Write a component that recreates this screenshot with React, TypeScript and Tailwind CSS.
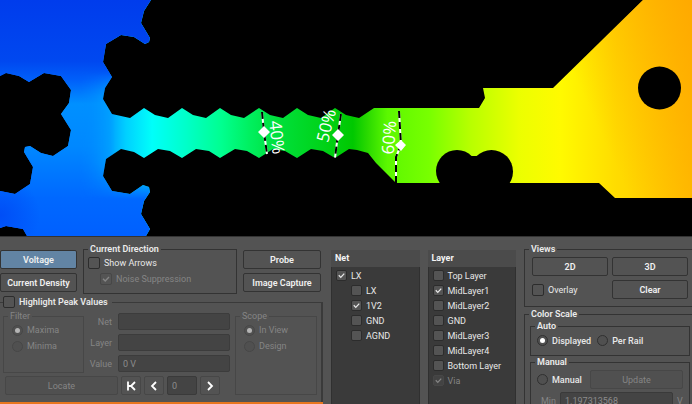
import { ReactNode } from "react";

const HEADER = "bg-[#4b4b4b] px-1 h-[17px] leading-4 font-bold text-[#f4f4f4]";

const nets = [
    { name: "LX", checked: true, child: false },
    { name: "LX", checked: false, child: true },
    { name: "1V2", checked: true, child: true },
    { name: "GND", checked: false, child: true },
    { name: "AGND", checked: false, child: true }
];

const layers = [
    { name: "Top Layer", checked: false },
    { name: "MidLayer1", checked: true },
    { name: "MidLayer2", checked: false },
    { name: "GND", checked: false },
    { name: "MidLayer3", checked: false },
    { name: "MidLayer4", checked: false },
    { name: "Bottom Layer", checked: false },
    { name: "Via", checked: true, disabled: true }
];

function Check({ label, checked = false, disabled = false, small = false }: { label: string; checked?: boolean; disabled?: boolean; small?: boolean }) {
    return (
        <label className={`flex items-center gap-1 whitespace-nowrap ${small ? "h-[15px]" : "h-4"} ${disabled ? "text-[#858585]" : "text-[#e8e8e8]"}`}>
            <span className={`relative block shrink-0 ${small ? "size-[11px]" : "size-3"}`}>
                <input
                    type="checkbox"
                    defaultChecked={checked}
                    disabled={disabled}
                    className={`peer block size-full appearance-none rounded-xs border ${disabled ? "border-[#474747]" : "border-[#2c2c2c]"} ${small && disabled ? "bg-[#434343]" : "bg-[#545454]"}`}
                />
                <svg viewBox="0 0 12 12" className="pointer-events-none absolute inset-0 hidden size-full peer-checked:block" fill="none" stroke="currentColor" strokeWidth="1.4">
                    <path d="M3 5.8 L5.2 8 L9 4" />
                </svg>
            </span>
            {label}
        </label>
    )
}

function Radio({ label, name, checked = false, disabled = false }: { label: string; name: string; checked?: boolean; disabled?: boolean }) {
    return (
        <label className={`flex items-center gap-1 whitespace-nowrap ${disabled ? "h-4 text-[#858585]" : "h-[17px] font-medium text-[#e8e8e8]"}`}>
            <span className="relative block size-[11px] shrink-0">
                <input
                    type="radio"
                    name={name}
                    defaultChecked={checked}
                    disabled={disabled}
                    className="peer block size-full appearance-none rounded-full border border-[#303030] bg-[#505050] disabled:border-[#474747]"
                />
                <span className={`pointer-events-none absolute inset-[3px] hidden rounded-full peer-checked:block ${disabled ? "bg-[#b4b4b4]" : "bg-white"}`} />
            </span>
            {label}
        </label>
    )
}

function Button({ children, className = "border-[#333333]", label }: { children: ReactNode; className?: string; label?: string }) {
    return (
        <button aria-label={label} className={`flex h-[19px] items-center justify-center whitespace-nowrap rounded-xs border font-semibold text-[#f0f0f0] ${className}`}>
            {children}
        </button>
    )
}

function Group({ title, disabled = false, className = "", children }: { title: string; disabled?: boolean; className?: string; children: ReactNode }) {
    return (
        <fieldset className={`min-w-0 border ${disabled ? "border-[#474747]" : "border-[#333333]"} ${className}`}>
            <legend className={`ml-1 px-0.5 leading-3 ${disabled ? "text-[#858585]" : "font-semibold text-[#ececec]"}`}>{title}</legend>
            {children}
        </fieldset>
    )
}

function Field({ label, value = "" }: { label: string; value?: string }) {
    return (
        <label className="flex items-center gap-1.5 text-[#858585]">
            <span className="w-7 text-right">{label}</span>
            <input defaultValue={value} disabled className="h-[17px] w-28 rounded-xs border border-[#3c3c3c] bg-[#444444] px-1 text-[#8c8c8c]" />
        </label>
    )
}

function VoltageMap() {
    return (
        <svg viewBox="0 0 692 236" preserveAspectRatio="xMidYMid slice" className="block h-[236px] w-full shrink-0 bg-black" role="img" aria-label="Voltage map">
            <defs>
                <linearGradient id="drop" gradientUnits="userSpaceOnUse" x1="0" y1="0" x2="692" y2="0">
                    <stop offset="0" stopColor="#0060ff" />
                    <stop offset="0.13" stopColor="#0090ff" />
                    <stop offset="0.16" stopColor="#00a4ff" />
                    <stop offset="0.182" stopColor="#00d0ff" />
                    <stop offset="0.22" stopColor="#00fffa" />
                    <stop offset="0.27" stopColor="#00ffc8" />
                    <stop offset="0.32" stopColor="#00ff90" />
                    <stop offset="0.36" stopColor="#00f060" />
                    <stop offset="0.4" stopColor="#00e03c" />
                    <stop offset="0.46" stopColor="#00d41c" />
                    <stop offset="0.51" stopColor="#00c800" />
                    <stop offset="0.53" stopColor="#28d800" />
                    <stop offset="0.56" stopColor="#5cf800" />
                    <stop offset="0.62" stopColor="#78ff00" />
                    <stop offset="0.68" stopColor="#b8ff00" />
                    <stop offset="0.75" stopColor="#ecff00" />
                    <stop offset="0.81" stopColor="#fffa00" />
                    <stop offset="0.89" stopColor="#ffdc00" />
                    <stop offset="1" stopColor="#ffc000" />
                </linearGradient>
                <linearGradient id="cold" x1="0" y1="0" x2="0" y2="1">
                    <stop offset="0" stopColor="#003cec" />
                    <stop offset="0.26" stopColor="#0048f0" />
                    <stop offset="0.34" stopColor="#0060fa" />
                    <stop offset="0.44" stopColor="#0090ff" />
                    <stop offset="0.62" stopColor="#0088ff" />
                    <stop offset="0.84" stopColor="#0068ff" />
                    <stop offset="1" stopColor="#0060ff" />
                </linearGradient>
                <linearGradient id="fade" x1="0" y1="0" x2="1" y2="0">
                    <stop offset="0" stopColor="white" />
                    <stop offset="0.5" stopColor="white" />
                    <stop offset="0.72" stopColor="black" />
                </linearGradient>
                <linearGradient id="fadeTop" x1="0" y1="0" x2="0" y2="1">
                    <stop offset="0.75" stopColor="white" />
                    <stop offset="1" stopColor="white" stopOpacity="0" />
                </linearGradient>
                <linearGradient id="fadeBottom" x1="0" y1="1" x2="0" y2="0">
                    <stop offset="0.5" stopColor="white" />
                    <stop offset="1" stopColor="white" stopOpacity="0" />
                </linearGradient>
                <mask id="coldMask">
                    <rect width="160" height="236" fill="url(#fade)" />
                    <rect width="160" height="96" fill="url(#fadeTop)" />
                    <rect y="162" width="160" height="74" fill="url(#fadeBottom)" />
                </mask>
                <radialGradient id="dark" gradientUnits="userSpaceOnUse" cx="0" cy="215" r="40">
                    <stop offset="0" stopColor="#0048f4" stopOpacity="0.8" />
                    <stop offset="1" stopColor="#0048f4" stopOpacity="0" />
                </radialGradient>
                <linearGradient id="hot" gradientUnits="userSpaceOnUse" x1="590" y1="110" x2="720" y2="50">
                    <stop offset="0" stopColor="#ffa600" stopOpacity="0" />
                    <stop offset="1" stopColor="#ffa600" stopOpacity="0.9" />
                </linearGradient>
                <clipPath id="copper">
                    <path
                        clipRule="evenodd"
                        d="M0 0 H151 L144 11 L141 23 L150 38 L149 42 L145 44 L134 37 L121 35 L106 44 L103 62 L112 77 L105 88 L103 99 L112 114 L130 118
                        L144 108 L155 115 L168 118 L182 108 L193 115 L206 118 L220 108 L231 115 L244 118 L259 108 L270 115 L283 118 L297 108 L308 115 L321 118
                        L335 108 L346 115 L359 118 L374 108 H479 L485 98 L483 88 H553 L643 0 H692 V198 H615 L599 183
                        H396 L376 163 L368 153 L357 150 L349 149 L335 158
                        L323 151 L311 149 L297 158 L285 151 L273 149 L259 158 L247 151 L235 149 L220 158 L209 151 L196 149 L182 158 L170 151 L158 149
                        L144 158 L134 152 L121 149 L106 159 L103 176 L112 191 L130 194 L143 185 L149 187 L150 192 L144 201 L141 214 L150 229 L146 236
                        H27 L23 229 L6 226 L0 228 Z
                        M0 76 L6 73 L19 76 L29 82 L44 73 L61 76 L71 90 L69 103 L61 114 L71 130 L68 146 L53 156 L41 153 L30 146 L25 147 L24 152 L33 167 L30 184 L15 194 L0 191 Z"
                    />
                </clipPath>
            </defs>
            <g clipPath="url(#copper)">
                <rect width="692" height="236" fill="url(#drop)" />
                <rect width="160" height="236" fill="url(#cold)" mask="url(#coldMask)" />
                <rect y="170" width="70" height="66" fill="url(#dark)" />
                <rect x="540" width="152" height="200" fill="url(#hot)" />
            </g>
            <circle cx="457" cy="171" r="21" />
            <circle cx="491.500" cy="171.500" r="21.500" />
            <path d="M466 156 H482 V172 H466 Z" />
            <circle cx="659.500" cy="88" r="21.500" />
            <g fill="none" strokeWidth="2">
                <path d="M262 112 L264 132 L267 154 M341 114 L338 134 L335 158 M399 111 L401 145 L396 157 V183" stroke="white" />
                <path d="M262 112 L264 132 L267 154 M341 114 L338 134 L335 158 M399 111 L401 145 L396 157 V183" stroke="black" strokeDasharray="7 4" />
            </g>
            <path d="M264 126 L270 132 L264 138 L258 132 Z M338 129 L344 135 L338 141 L332 135 Z M401 140 L406 145 L401 151 L395 145 Z" fill="white" />
            <g fill="white" fontSize="17" textAnchor="middle" fontFamily="'Open Sans', sans-serif">
                <text transform="translate(271 138) rotate(84)">40%</text>
                <text transform="translate(332 127) rotate(-76)">50%</text>
                <text transform="translate(395 138) rotate(-86)">60%</text>
            </g>
        </svg>
    )
}

export default function App() {
    return (
        <div className="flex h-screen flex-col overflow-hidden bg-[#535353] font-[Roboto,sans-serif] text-[9px] leading-4">
            <VoltageMap />
            <div className="flex min-h-0 flex-1 border-t border-[#333333]">
                <div className="flex w-[323px] shrink-0 flex-col border-b-2 border-[#e8761e]">
                    <div className="flex gap-1.5 pt-[6px] pr-0.5">
                        <div className="flex w-[77px] flex-col gap-1 pt-[7px]">
                            <Button className="border-[#333333] bg-[#6284a4]">Voltage</Button>
                            <Button>Current Density</Button>
                        </div>
                        <Group title="Current Direction" className="h-[51px] flex-1">
                            <div className="pl-1">
                                <Check label="Show Arrows" />
                                <div className="pl-3">
                                    <Check label="Noise Suppression" checked disabled />
                                </div>
                            </div>
                        </Group>
                        <div className="flex w-[78px] flex-col gap-1 pt-[7px]">
                            <Button>Probe</Button>
                            <Button>Image Capture</Button>
                        </div>
                    </div>
                    <fieldset className="min-h-0 min-w-0 flex-1 border-t border-r-2 border-[#3a3a3a]">
                        <legend className="ml-[3px] pr-1 font-semibold">
                            <Check label="Highlight Peak Values" />
                        </legend>
                        <div className="flex justify-between pr-1 pl-[3px]">
                            <div className="flex flex-col gap-[3px]">
                                <div className="flex">
                                    <Group title="Filter" disabled className="h-[63px] w-[81px]">
                                        <div className="pl-2">
                                            <Radio name="filter" label="Maxima" checked disabled />
                                            <Radio name="filter" label="Minima" disabled />
                                        </div>
                                    </Group>
                                    <div className="flex flex-col gap-1 pt-[3px]">
                                        <Field label="Net" />
                                        <Field label="Layer" />
                                        <Field label="Value" value="0 V" />
                                    </div>
                                </div>
                                <div className="flex gap-[3px] pl-0.5">
                                    <button disabled className="h-[19px] w-[113px] rounded-xs border border-[#474747] bg-[#505050] text-[#858585]">Locate</button>
                                    <Button label="First peak" className="w-5 border-[#474747]">
                                        <svg viewBox="0 0 12 12" className="size-3 shrink-0" fill="none" stroke="white" strokeWidth="1.8"><path d="M3 1.5 V10.5 M10 2 L6 6 L10 10 M6 6 H3" /></svg>
                                    </Button>
                                    <Button label="Previous peak" className="w-5 border-[#474747]">
                                        <svg viewBox="0 0 12 12" className="size-3 shrink-0" fill="none" stroke="white" strokeWidth="1.8"><path d="M8 2 L4 6 L8 10" /></svg>
                                    </Button>
                                    <input aria-label="Peak index" defaultValue="0" disabled className="h-[19px] w-[30px] rounded-xs border border-[#3a3a3a] bg-[#444444] px-1 text-[#8c8c8c]" />
                                    <Button label="Next peak" className="w-5 border-[#474747]">
                                        <svg viewBox="0 0 12 12" className="size-3 shrink-0" fill="none" stroke="white" strokeWidth="1.8"><path d="M4 2 L8 6 L4 10" /></svg>
                                    </Button>
                                </div>
                            </div>
                            <Group title="Scope" disabled className="h-[85px] w-[82px]">
                                <div className="pl-2">
                                    <Radio name="scope" label="In View" checked disabled />
                                    <Radio name="scope" label="Design" disabled />
                                </div>
                            </Group>
                        </div>
                    </fieldset>
                </div>

                <div className="flex flex-1 gap-2 pt-[13px] pl-2">
                    <section className="flex flex-1 flex-col">
                        <h2 className={HEADER}>Net</h2>
                        <div className="flex-1 border-x border-[#303030] bg-[#3a3a3a] pt-px pl-1">
                            {
                                nets.map((net, i) => {
                                    return (
                                        <div key={i} className={net.child ? "pl-[15px]" : ""}>
                                            <Check small label={net.name} checked={net.checked} />
                                        </div>
                                    )
                                })
                            }
                        </div>
                    </section>
                    <section className="flex flex-1 flex-col">
                        <h2 className={HEADER}>Layer</h2>
                        <div className="flex-1 border-x border-[#303030] bg-[#3a3a3a] pt-px pl-1">
                            {
                                layers.map((layer) => {
                                    return <Check key={layer.name} small label={layer.name} checked={layer.checked} disabled={layer.disabled} />
                                })
                            }
                        </div>
                    </section>
                </div>

                <div className="ml-2 flex w-[168px] shrink-0 flex-col gap-px pt-1.5">
                    <Group title="Views" className="h-16 border-r-0">
                        <div className="grid grid-cols-2 gap-1 pt-0.5 pr-1 pl-[7px]">
                            <Button>2D</Button>
                            <Button>3D</Button>
                            <div className="flex items-center">
                                <Check label="Overlay" />
                            </div>
                            <Button>Clear</Button>
                        </div>
                    </Group>
                    <Group title="Color Scale" className="min-h-0 flex-1 border-r-0 border-b-0">
                        <div className="flex flex-col pr-0.5 pl-[5px]">
                            <Group title="Auto" className="h-9">
                                <div className="flex gap-1.5 pl-1.5">
                                    <Radio name="scale" label="Displayed" checked />
                                    <Radio name="scale" label="Per Rail" />
                                </div>
                            </Group>
                            <Group title="Manual" className="border-b-0">
                                <div className="flex items-center justify-between pt-0.5 pr-1.5 pl-1.5">
                                    <Radio name="scale" label="Manual" />
                                    <button disabled className="h-[19px] w-[93px] rounded-xs border border-[#474747] bg-[#505050] text-[#858585]">Update</button>
                                </div>
                                <label className="mt-[3px] flex items-center gap-1 pl-2.5 leading-3 text-[#858585]">
                                    Min
                                    <input defaultValue="1.197313568" disabled className="h-[17px] w-[113px] rounded-xs border border-[#3a3a3a] bg-[#444444] px-1 text-[#8c8c8c]" />
                                    V
                                </label>
                            </Group>
                        </div>
                    </Group>
                </div>
            </div>
        </div>
    )
}
